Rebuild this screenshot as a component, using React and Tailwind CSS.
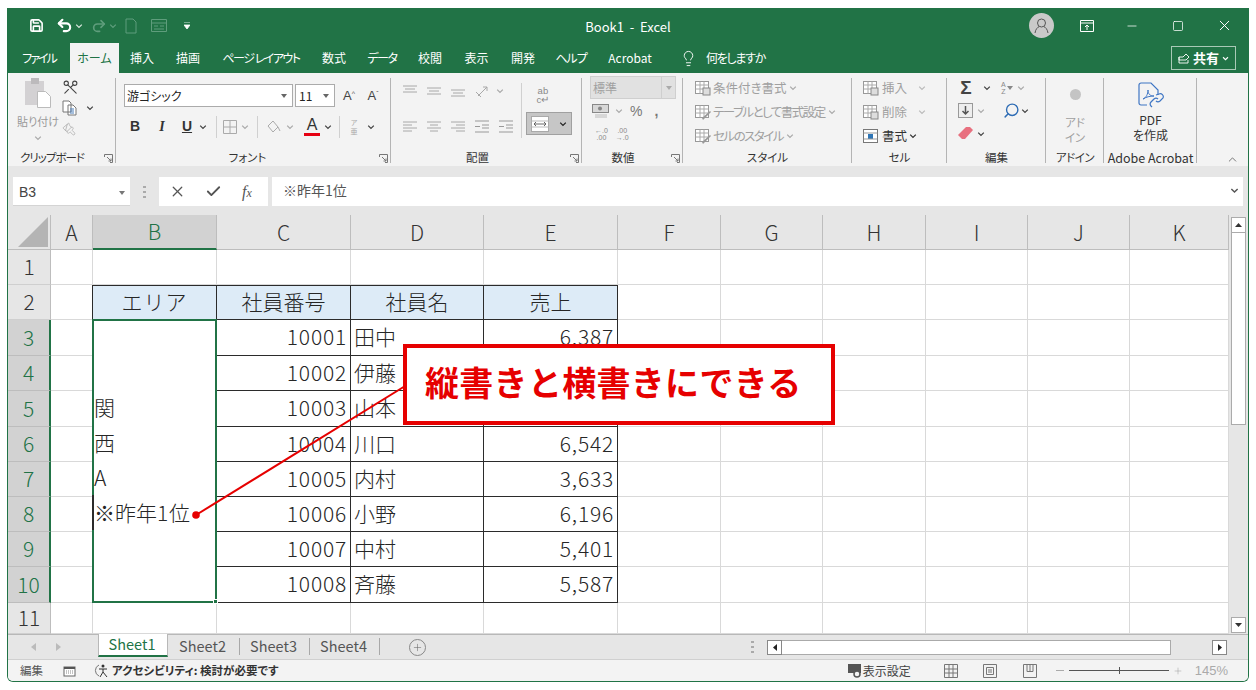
import React from "react";
import { Save, Undo2, Redo2, Lightbulb, Minus, Square, X, Scissors, Paintbrush, Check, Search, Plus, ChevronUp } from "lucide-react";

const Chev = ({ c = "#444", s = 8 }) => (
  <svg width={s} height={s} viewBox="0 0 8 8" className="shrink-0"><path d="M1.2 2.6 4 5.4 6.8 2.6" fill="none" stroke={c} strokeWidth="1.3" /></svg>
);
const Tri = ({ c = "#555" }) => (
  <svg width="6" height="4" viewBox="0 0 6 4" className="shrink-0"><path d="M0 0h6L3 4z" fill={c} /></svg>
);
const Launcher = () => (
  <svg width="9" height="9" viewBox="0 0 9 9" className="shrink-0"><path d="M.5 3V.5h8v8H6M3 3l4 4M7 4.5V7H4.5" fill="none" stroke="#777" strokeWidth="1" /></svg>
);
const Lines = ({ rows, c = "#a8a8a8" }) => (
  <svg width="16" height="14" viewBox="0 0 16 14" className="shrink-0">
    {rows.map(([x1, x2, y], i) => <path key={i} d={`M${x1} ${y}H${x2}`} stroke={c} strokeWidth="1" />)}
  </svg>
);
const Sep = () => <div className="w-px h-[22px] bg-[#d0d0d0] shrink-0" />;

function Group({ w, label, launcher, children }) {
  return (
    <div className={`${w} shrink-0 h-full flex flex-col relative`}>
      <div className="flex-1 min-h-0">{children}</div>
      <div className="h-[19px] flex items-center relative pt-[3px]">
        <div className="w-full text-center text-[11.5px] leading-none text-[#333]">{label}</div>
        {launcher && <div className="absolute right-[3px] top-[7px]"><Launcher /></div>}
      </div>
      <div className="absolute right-0 top-[5px] bottom-[3px] w-px bg-[#b4b4b4]" />
    </div>
  );
}

const TABS = [
  ["w-[62px] tracking-[-2px]", "ファイル"], ["w-[49px]", "ホーム", true], ["w-[46px]", "挿入"], ["w-[46px]", "描画"], ["w-[100px] tracking-[-1.5px]", "ページ レイアウト"],
  ["w-[46px]", "数式"], ["w-[50px] tracking-[-1.5px]", "データ"], ["w-[46px]", "校閲"], ["w-[47px]", "表示"], ["w-[46px]", "開発"], ["w-[50px] tracking-[-1px]", "ヘルプ"], ["w-[68px]", "Acrobat"],
];

function TitleBar() {
  return (
    <div className="h-[35px] shrink-0 bg-[#217346] flex items-center relative text-white">
      <div className="flex items-center pl-[21px]">
        <Save size={15} className="w-[15px] shrink-0" strokeWidth={2.6} />
        <Undo2 size={17} strokeWidth={3} className="ml-[12px]" />
        <div className="ml-[2px]"><Chev c="#d8e6dd" /></div>
        <Redo2 size={16} strokeWidth={2.5} color="#5f9d7c" className="ml-[8px]" />
        <div className="ml-[2px]"><Chev c="#5f9d7c" /></div>
        <svg width="14" height="16" viewBox="0 0 14 16" className="ml-[7px]"><path d="M2 1h7l3 3v11H2z" fill="none" stroke="#5f9d7c" /></svg>
        <svg width="16" height="13" viewBox="0 0 16 13" className="ml-[13px]"><path d="M.5.5h15v12H.5zM.5 4h15M3 7h4M9 7h4M3 10h10" fill="none" stroke="#5f9d7c" /></svg>
        <svg width="6" height="7" viewBox="0 0 6 7" className="ml-[17px]"><path d="M0 0h6M0 3h6L3 7z" stroke="#fff" fill="#fff" strokeWidth=".8" /></svg>
      </div>
      <div className="absolute left-[520px] w-[200px] top-[11px] text-center text-[13px] leading-4">Book1&nbsp; -&nbsp; Excel</div>
      <div className="ml-auto flex items-center">
        <div className="w-[25px] h-[25px] rounded-full bg-[#c9c9c9] flex items-center justify-center">
          <svg width="17" height="17" viewBox="0 0 17 17"><circle cx="8.5" cy="6" r="4" fill="none" stroke="#555" /><path d="M2 16c.5-4 3-6 4-6.300M15 16c-.5-4-3-6-4-6.300" fill="none" stroke="#555" /></svg>
        </div>
        <svg width="14" height="12" viewBox="0 0 14 12" className="ml-[26px]"><path d="M.5.5h13v11H.5zM.5 3h13M7 10V5M5 7l2-2 2 2" fill="none" stroke="#fff" /></svg>
        <Minus size={14} strokeWidth={1.3} className="ml-[31px]" />
        <Square size={12} strokeWidth={1.5} className="ml-[33px]" />
        <X size={17} strokeWidth={1.4} className="ml-[32px] mr-[15px]" />
      </div>
    </div>
  );
}

function TabBar() {
  return (
    <div className="h-[30px] shrink-0 bg-[#217346] flex items-stretch text-white text-[12px]">
      {TABS.map(([w, t, active]) => (
        <div key={t} className={`${w} flex items-center justify-center whitespace-nowrap ${active ? "bg-[#f3f3f3] text-[#217346]" : ""}`}>{t}</div>
      ))}
      <div className="flex items-center ml-[16px]">
        <Lightbulb size={17} strokeWidth={1.3} />
        <span className="ml-[9px] tracking-[-1.3px]">何をしますか</span>
      </div>
      <div className="ml-auto mr-[12px] self-start mt-[3px] w-[65px] h-[24px] border border-[#a9c9b6] flex items-center justify-center gap-[3px]">
        <svg width="12" height="12" viewBox="0 0 12 12"><path d="M1 5h4l3-3 3 3-3 3H1zM1 5v6h9V8" fill="none" stroke="#fff" strokeWidth=".9" /></svg>
        <span className="font-bold text-[13px]">共有</span>
        <Chev c="#fff" s={7} />
      </div>
    </div>
  );
}

function Clipboard() {
  return (
    <Group w="w-[108px]" label={<span className="pr-[20px] tracking-[-1px]">クリップボード</span>} launcher>
      <div className="flex pt-[5px] pl-[10px]">
        <div className="w-[40px] flex flex-col items-center">
          <svg width="26" height="30" viewBox="0 0 26 30"><rect x="0" y="3" width="19" height="24" fill="#d3d1d3" /><rect x="6" y="0" width="8" height="6" fill="#bcbabc" /><path d="M12.500 13.500h8l5 5v11h-13z" fill="#fff" stroke="#bbb" /></svg>
          <div className="text-[11px] leading-none mt-[8px] text-[#999] whitespace-nowrap">貼り付け</div>
          <div className="mt-[7px]"><Chev c="#aaa" /></div>
        </div>
        <div className="ml-[4px] flex flex-col items-start pt-[1px]">
          <Scissors size={17} strokeWidth={1.5} color="#444" className="rotate-90" />
          <div className="flex items-center mt-[4px]">
            <svg width="15" height="16" viewBox="0 0 15 16"><path d="M1 1h6l2 2v9H1zM6 5h5l3 3v7H6z" fill="#fff" stroke="#777" /><path d="M8 9h4M8 11h4M8 13h4" stroke="#4a7ebb" /></svg>
            <div className="ml-[9px]"><Chev /></div>
          </div>
          <Paintbrush size={14} strokeWidth={1.3} color="#aaa" className="mt-[6px] rotate-90" />
        </div>
      </div>
    </Group>
  );
}

function Font() {
  return (
    <Group w="w-[275px]" label={<span className="pr-[12px]">フォント</span>} launcher>
      <div className="pt-[11px] pl-[8px]">
        <div className="flex items-center">
          <div className="w-[169px] h-[23px] bg-white border border-[#ababab] flex items-center pl-[2px] pr-[5px] text-[12px] text-[#222]">
            <span>游ゴシック</span><div className="ml-auto"><Tri c="#666" /></div>
          </div>
          <div className="ml-[2px] w-[40px] h-[23px] bg-white border border-[#ababab] flex items-center pl-[3px] pr-[5px] text-[12px] text-[#222]">
            <span>11</span><div className="ml-auto"><Tri c="#666" /></div>
          </div>
          <div className="w-[24px] ml-[1px] text-center text-[#444] text-[13px] pl-[2px] font-['Liberation_Sans']">A<sup className="text-[7px] text-[#555]">^</sup></div>
          <div className="w-[24px] text-center text-[#444] text-[13px] pl-[2px] font-['Liberation_Sans']">A<sup className="text-[7px] text-[#555]">ˇ</sup></div>
        </div>
        <div className="flex items-center h-[23px] mt-2 text-[14px] text-[#333]">
          <div className="w-[20px] ml-[1px] text-center font-bold font-['Liberation_Sans']">B</div>
          <div className="w-[24px] ml-[5px] text-center font-bold italic font-['Liberation_Serif']">I</div>
          <div className="w-[20px] ml-[3px] text-center font-bold underline font-['Liberation_Sans']">U</div>
          <div className="w-[12px] flex justify-center"><Chev /></div>
          <div className="ml-[7px]"><Sep /></div>
          <svg width="14" height="14" viewBox="0 0 14 14" className="ml-[6px]"><path d="M.5.5h13v13H.5zM7 .5v13M.5 7h13" fill="none" stroke="#aaa" /></svg>
          <div className="ml-[4px]"><Chev c="#aaa" /></div>
          <div className="ml-[8px]"><Sep /></div>
          <svg width="15" height="15" viewBox="0 0 15 15" className="ml-[8px]"><path d="M2 7l5-5 5 6-5 5z" fill="none" stroke="#aaa" /><path d="M12 8l2 4" stroke="#aaa" /></svg>
          <div className="ml-[5px]"><Chev c="#aaa" /></div>
          <div className="ml-[10px] w-[16px] flex flex-col items-center leading-none">
            <span className="text-[16px] leading-[14px] text-[#333] font-['Liberation_Sans']">A</span>
            <div className="w-[16px] h-[3px] bg-[#e60012] mt-[1px]" />
          </div>
          <div className="ml-[4px]"><Chev /></div>
          <div className="ml-[7px]"><Sep /></div>
          <div className="ml-[8px] text-[7px] text-[#aaa] leading-[9px] w-[12px] text-center">ア<br />亜</div>
          <div className="ml-[7px]"><Chev /></div>
        </div>
      </div>
    </Group>
  );
}

function Align() {
  const T = [[1, 15, 2], [3, 13, 5], [1, 15, 8]];
  const M = [[1, 15, 4], [3, 13, 7], [1, 15, 10]];
  const B = [[1, 15, 6], [3, 13, 9], [1, 15, 12]];
  const L = [[1, 15, 2], [1, 10, 5], [1, 15, 8], [1, 10, 11]];
  const C = [[1, 15, 2], [4, 12, 5], [1, 15, 8], [4, 12, 11]];
  const R = [[1, 15, 2], [6, 15, 5], [1, 15, 8], [6, 15, 11]];
  return (
    <Group w="w-[191px]" label={<span className="pr-[18px]">配置</span>} launcher>
      <div className="flex pt-[10px] pl-[11px]">
        <div className="w-[120px] border-r border-[#d0d0d0] h-[55px]">
          <div className="flex items-center h-[16px] gap-[8px]">
            <Lines rows={T} /><Lines rows={M} /><Lines rows={B} />
            <svg width="16" height="15" viewBox="0 0 16 15" className="ml-[1px]"><path d="M3 12 12 3M12 3H8M12 3v4M1 8l5 5" fill="none" stroke="#a8a8a8" /></svg>
            <div className="-ml-[3px]"><Chev c="#aaa" /></div>
          </div>
          <div className="flex items-center h-[16px] gap-[8px] mt-[20px]">
            <Lines rows={L} /><Lines rows={C} /><Lines rows={R} />
            <Lines rows={[[1, 15, 1], [8, 15, 5], [8, 15, 8], [1, 15, 12], [1, 6, 6.500]]} c="#999" />
            <Lines rows={[[1, 15, 1], [8, 15, 5], [8, 15, 8], [1, 15, 12], [1, 6, 6.500]]} c="#999" />
          </div>
        </div>
        <div className="ml-[5px]">
          <div className="ml-[8px] text-[9.5px] leading-[9px] text-[#888] font-['Liberation_Sans'] tracking-wide text-center w-[16px] pt-[3px]">ab<br />c↵</div>
          <div className="mt-[8px] -ml-[1px] w-[46px] h-[23px] bg-[#c6c6c6] border border-[#a0a0a0] flex items-center pl-[4px]">
            <svg width="18" height="16" viewBox="0 0 18 16"><rect x=".5" y=".5" width="17" height="15" fill="#fff" stroke="#aaa" /><path d="M.5 5h17M.5 11h17" stroke="#bbb" /><path d="M3 8h12M3 8l2-2M3 8l2 2M15 8l-2-2M15 8l-2 2" stroke="#666" fill="none" /></svg>
            <div className="ml-[10px]"><Chev c="#222" /></div>
          </div>
        </div>
      </div>
    </Group>
  );
}

function NumberG() {
  return (
    <Group w="w-[101px]" label={<span className="pr-[19px]">数値</span>} launcher>
      <div className="pt-[3px] pl-[8px]">
        <div className="w-[86px] h-[23px] bg-[#e1e1e1] border border-[#cfcfcf] flex items-center pl-[2px] text-[12px] text-[#a0a0a0]">
          <span>標準</span>
          <div className="ml-auto w-[14px] h-full border-l border-[#cfcfcf] flex items-center justify-center"><Tri c="#aaa" /></div>
        </div>
        <div className="flex items-center h-[22px] mt-[1px] pl-[2px]">
          <svg width="17" height="15" viewBox="0 0 17 15"><rect x=".5" y=".5" width="16" height="8" fill="#d8d8d8" stroke="#888" /><circle cx="8" cy="4.500" r="2" fill="#888" /><path d="M3 11h12M3 13h12" stroke="#bbb" /></svg>
          <div className="ml-[6px]"><Chev c="#aaa" /></div>
          <span className="ml-[7px] text-[14px] text-[#777] font-['Liberation_Sans']">%</span>
          <span className="ml-[12px] text-[14px] font-bold leading-none text-[#777] font-['Liberation_Sans']">,</span>
        </div>
        <div className="flex items-center h-[22px] mt-[1px] pl-[5px] text-[7px] leading-[7px] text-[#888] font-['Liberation_Sans']">
          <div className="text-center">←.0<br />.00</div>
          <div className="ml-[8px] text-center">.00<br />→.0</div>
        </div>
      </div>
    </Group>
  );
}

const StyleIcon = ({ kind }) => (
  <svg width="16" height="15" viewBox="0 0 16 15" className="shrink-0">
    <rect x=".5" y=".5" width="13" height="12" fill="#fff" stroke="#999" />
    <path d="M.5 4h13M.5 8h13M5 .5v12M9 .5v12" stroke="#aaa" />
    {kind === 1 && <rect x="8" y="7" width="7" height="7" fill="#ddd" stroke="#888" />}
    {kind !== 1 && <path d="M7 13l8-7 1 1-8 8z" fill="#999" />}
  </svg>
);

function Styles() {
  const rows = [[1, "条件付き書式", ""], [2, "テーブルとして書式設定", "tracking-[-1.5px]"], [3, "セルのスタイル", "tracking-[-1.5px]"]];
  return (
    <Group w="w-[169px]" label="スタイル">
      <div className="pt-[3px] pl-[12px]">
        {rows.map(([k, t, tr]) => (
          <div key={k} className="flex items-center h-[24px] text-[12.5px] text-[#a0a0a0] whitespace-nowrap">
            <StyleIcon kind={k} />
            <span className={`ml-[2px] ${tr}`}>{t}</span>
            <div className="ml-[3px]"><Chev c="#aaa" /></div>
          </div>
        ))}
      </div>
    </Group>
  );
}

function Cells() {
  return (
    <Group w="w-[95px]" label="セル">
      <div className="pt-[3px] pl-[11px]">
        <div className="flex items-center h-[24px] text-[12.5px] text-[#a0a0a0]">
          <StyleIcon kind={1} /><span className="ml-[3px] w-[36px]">挿入</span><Chev c="#bbb" />
        </div>
        <div className="flex items-center h-[24px] text-[12.5px] text-[#a0a0a0]">
          <StyleIcon kind={1} /><span className="ml-[3px] w-[36px]">削除</span><Chev c="#bbb" />
        </div>
        <div className="flex items-center h-[24px] text-[12.5px] text-[#333]">
          <svg width="16" height="15" viewBox="0 0 16 15" className="shrink-0"><rect x=".5" y=".5" width="14" height="13" fill="#fff" stroke="#777" /><rect x="5" y="5" width="5" height="5" fill="#2f75b5" /><path d="M.5 4h14M.5 10h14" stroke="#999" /></svg>
          <span className="ml-[3px]">書式</span>
          <div className="ml-[2px]"><Chev c="#333" /></div>
        </div>
      </div>
    </Group>
  );
}

function Edit() {
  return (
    <Group w="w-[99px]" label="編集">
      <div className="pt-[3px] pl-[11px]">
        <div className="flex items-center h-[23px]">
          <span className="w-[16px] text-[19px] leading-none text-[#444] font-['Liberation_Sans'] font-bold text-center">Σ</span>
          <div className="ml-[9px]"><Chev /></div>
          <div className="ml-[10px] text-[7px] leading-[7px] text-[#888] font-['Liberation_Sans'] text-center">A<br />Z</div>
          <div className="ml-[1px]"><Tri c="#888" /></div>
          <div className="ml-[4px]"><Chev c="#aaa" /></div>
        </div>
        <div className="flex items-center h-[23px]">
          <svg width="15" height="15" viewBox="0 0 15 15" className="shrink-0"><rect x=".5" y=".5" width="14" height="14" fill="#eee" stroke="#999" /><path d="M7.500 3v8M4.500 8l3 3 3-3" fill="none" stroke="#555" strokeWidth="1.500" /></svg>
          <div className="ml-[4px]"><Chev c="#aaa" /></div>
          <Search size={17} strokeWidth={2} color="#2f6db5" className="ml-[18px] -scale-x-100" />
          <div className="ml-[1px]"><Chev /></div>
        </div>
        <div className="flex items-center h-[23px]">
          <svg width="15" height="13" viewBox="0 0 15 13" className="shrink-0"><path d="M0 8 8 0h4l3 3-8 9H4z" fill="#e8707f" /></svg>
          <div className="ml-[4px]"><Chev /></div>
        </div>
      </div>
    </Group>
  );
}

function Addin() {
  return (
    <Group w="w-[58px]" label={<span className="tracking-[-.5px]">アドイン</span>}>
      <div className="flex flex-col items-center pt-[16px] text-[11.5px] leading-[15px] text-[#a0a0a0]">
        <div className="w-[11px] h-[11px] rounded-full bg-[#c4c4c4]" />
        <div className="mt-[15px]">アド</div>
        <div>イン</div>
      </div>
    </Group>
  );
}

function Acrobat() {
  return (
    <Group w="w-[93px]" label={<span className="text-[12.5px]">Adobe Acrobat</span>}>
      <div className="flex flex-col items-center pt-[9px] text-[12px] leading-[15px] text-[#333]">
        <svg width="27" height="28" viewBox="0 0 27 28">
          <path d="M10 23H4a2 2 0 0 1-2-2V3a2 2 0 0 1 2-2h10l7 7v5" fill="none" stroke="#3f76c4" strokeWidth="1.200" />
          <path d="M6 17c3-1 5-5 5-9 0 4 2 6 6 6-4 0-8 1-11 3z" fill="none" stroke="#3f76c4" />
          <path d="M15 25l-1-1a3 3 0 0 1 0-4l3-3a3 3 0 0 1 4 0M19 13l3-1a3 3 0 0 1 4 4l-3 3a3 3 0 0 1-4 0" fill="none" stroke="#3f76c4" strokeWidth="1.200" />
        </svg>
        <div className="mt-[2px]">PDF</div>
        <div>を作成</div>
      </div>
    </Group>
  );
}

function Ribbon() {
  return (
    <div className="h-[93px] shrink-0 bg-[#f3f3f3] flex relative text-[#333]">
      <Clipboard /><Font /><Align /><NumberG /><Styles /><Cells /><Edit /><Addin /><Acrobat />
      <ChevronUp size={13} strokeWidth={1.3} color="#444" className="absolute right-[9px] bottom-0" />
    </div>
  );
}

function FormulaBar() {
  return (
    <div className="h-[49px] shrink-0 bg-[#e6e6e6] px-[5px] pt-[11px] flex items-start">
      <div className="w-[117px] h-[29px] bg-white border-b border-[#d4d4d4] flex items-center pl-[6px] pr-[5px] pt-[3px] text-[14px] text-[#444] font-['Liberation_Sans']">
        <span>B3</span><div className="ml-auto"><Tri c="#777" /></div>
      </div>
      <div className="w-[29px] h-[29px] flex items-center justify-center">
        <svg width="3" height="12" viewBox="0 0 3 12"><path d="M0 0h3v2H0zM0 5h3v2H0zM0 10h3v2H0z" fill="#aaa" /></svg>
      </div>
      <div className="w-[109px] h-[29px] bg-white flex items-center text-[#555]">
        <X size={17} strokeWidth={1.8} className="ml-[10px]" />
        <Check size={17} strokeWidth={2.6} className="ml-[19px]" />
        <span className="ml-[20px] text-[16px] italic font-['Liberation_Serif']">f<span className="text-[12px]">x</span></span>
      </div>
      <div className="ml-[4px] w-[971px] h-[29px] bg-white flex items-center pl-[11px] pr-[4px] pb-[2px] text-[14px] text-[#555]">
        <span>※昨年1位</span>
        <div className="ml-auto"><Chev c="#555" s={9} /></div>
      </div>
    </div>
  );
}

const COLS = ["A", "B", "C", "D", "E", "F", "G", "H", "I", "J", "K"];
const DATA = [
  [3, "10001", "田中", "6,387"], [4, "10002", "伊藤", ""], [5, "10003", "山本", ""], [6, "10004", "川口", "6,542"],
  [7, "10005", "内村", "3,633"], [8, "10006", "小野", "6,196"], [9, "10007", "中村", "5,401"], [10, "10008", "斉藤", "5,587"],
];
const gridCell = "border-r border-b border-[#d9d9d9]";
const dataCell = "border-r border-b border-[#2b2b2b] flex items-center pb-[2px]";

const RowHead = ({ n, sel }) => (
  <div className={`flex items-center justify-center border-b pb-[1px] ${sel ? "bg-[#d2d2d2] text-[#217346] border-r-2 border-r-[#217346] border-b-[#bdbdbd]" : "bg-[#e6e6e6] text-[#333] border-r border-r-[#bdbdbd] border-b-[#cfcfcf]"}`}>{n}</div>
);
const Blank = ({ n = 1 }) => Array.from({ length: n }, (_, i) => <div key={i} className={gridCell} />);

function Sheet() {
  return (
    <div className="flex-1 min-w-0 grid grid-cols-[43px_42px_124px_134px_133px_134px_103px_102px_103px_102px_102px_99px] grid-rows-[35px_35px_35px_36px_35px_36px_35px_35px_35px_35px_36px_31px] text-[21px] leading-none font-light text-[#262626]">
      <div className="bg-[#e6e6e6] border-r border-b border-[#bdbdbd] flex items-end justify-end pr-[2px] pb-[2px]">
        <svg width="30" height="30" viewBox="0 0 30 30"><path d="M30 0v30H0z" fill="#b4b4b4" /></svg>
      </div>
      {COLS.map((c) => (
        <div key={c} className={`flex items-center justify-center border-r ${c === "B" ? "bg-[#d2d2d2] text-[#217346] border-b-2 border-b-[#217346] border-r-[#bdbdbd]" : "bg-[#e6e6e6] text-[#333] border-b border-[#bdbdbd]"}`}>{c}</div>
      ))}

      <RowHead n={1} /><Blank n={11} />

      <RowHead n={2} /><Blank />
      {["エリア", "社員番号", "社員名", "売上"].map((t, i) => (
        <div key={t} className={`bg-[#ddebf7] border-t border-r border-b border-[#2b2b2b] flex items-center justify-center pb-[2px] ${i === 0 ? "border-l -ml-px tracking-[1px]" : ""}`}>{t}</div>
      ))}
      <Blank n={6} />

      {DATA.map(([r, id, name, sale], i) => (
        <React.Fragment key={r}>
          <RowHead n={r} sel /><Blank />
          {i === 0 && (
            <div className="row-span-8 border-2 border-[#217346] -mt-px -ml-px relative flex flex-col pt-[68px]">
              <div className="h-[36px] flex items-center">関</div>
              <div className="h-[35px] flex items-center">西</div>
              <div className="h-[35px] flex items-center">A</div>
              <div className="h-[35px] flex items-center border-l-2 border-[#2b2b2b] -ml-[2px] whitespace-nowrap">※昨年<span className="tracking-[0.8px]">1</span>位</div>
              <div className="absolute -right-[3px] -bottom-[3px] w-[5px] h-[5px] bg-[#217346] border border-white" />
            </div>
          )}
          <div className={`${dataCell} justify-end pr-[3px] tracking-[0.8px]`}>{id}</div>
          <div className={`${dataCell} pl-[3px]`}>{name}</div>
          <div className={`${dataCell} justify-end pr-[3px] tracking-[0.8px]`}>{sale}</div>
          <Blank n={6} />
        </React.Fragment>
      ))}

      <RowHead n={11} /><Blank n={11} />
    </div>
  );
}

function VScroll() {
  return (
    <div className="w-[19px] shrink-0 bg-[#e6e6e6] flex flex-col pt-[2px] pb-[1px] pl-[2px] pr-[2px]">
      <div className="h-[16px] bg-white border border-[#ababab] flex items-center justify-center"><svg width="7" height="4" viewBox="0 0 7 4"><path d="M0 4h7L3.500 0z" fill="#333" /></svg></div>
      <div className="h-[193px] bg-white border border-[#ababab] -mt-px" />
      <div className="flex-1" />
      <div className="h-[16px] bg-white border border-[#ababab] flex items-center justify-center"><svg width="7" height="4" viewBox="0 0 7 4"><path d="M0 0h7L3.500 4z" fill="#333" /></svg></div>
    </div>
  );
}

function SheetTabs() {
  const Divider = () => <div className="w-px h-[17px] bg-[#a8a8a8]" />;
  return (
    <div className="h-[25px] shrink-0 bg-[#e6e6e6] border-t border-[#b8b8b8] flex items-start text-[14.5px] text-[#555]">
      <div className="w-[90px] h-full flex items-center pl-[23px] gap-[20px]">
        <svg width="5" height="8" viewBox="0 0 5 8"><path d="M5 0v8L0 4z" fill="#bbb" /></svg>
        <svg width="5" height="8" viewBox="0 0 5 8"><path d="M0 0v8l5-4z" fill="#bbb" /></svg>
      </div>
      <div className="-mt-px w-[70px] h-[23px] bg-white border-l border-r border-[#b8b8b8] border-b-2 border-b-[#217346] text-[#217346] flex items-center justify-center pr-[2px] pb-[1px]">Sheet1</div>
      <div className="w-[71px] h-[21px] flex items-center justify-center pr-[2px]">Sheet2</div>
      <div className="mt-[3px]"><Divider /></div>
      <div className="w-[69px] h-[21px] flex items-center justify-center pr-[2px]">Sheet3</div>
      <div className="mt-[3px]"><Divider /></div>
      <div className="w-[69px] h-[21px] flex items-center justify-center pr-[2px]">Sheet4</div>
      <div className="mt-[3px]"><Divider /></div>
      <div className="ml-[29px] mt-[4px] w-[17px] h-[17px] rounded-full border border-[#888] flex items-center justify-center"><Plus size={11} strokeWidth={1.2} color="#666" /></div>
      <svg width="3" height="12" viewBox="0 0 3 12" className="ml-[325px] mt-[6px]"><path d="M0 0h3v2H0zM0 5h3v2H0zM0 10h3v2H0z" fill="#aaa" /></svg>
      <div className="ml-[13px] mt-[5px] w-[15px] h-[15px] bg-white border border-[#888] flex items-center justify-center"><svg width="4" height="7" viewBox="0 0 4 7"><path d="M4 0v7L0 3.500z" fill="#222" /></svg></div>
      <div className="mt-[5px] w-[389px] h-[15px] bg-white border border-l-0 border-[#aaa]" />
      <div className="ml-[41px] mt-[5px] w-[15px] h-[15px] bg-white border border-[#888] flex items-center justify-center"><svg width="4" height="7" viewBox="0 0 4 7"><path d="M0 0v7l4-3.500z" fill="#222" /></svg></div>
    </div>
  );
}

function StatusBar() {
  return (
    <div className="h-[22px] shrink-0 bg-[#f3f3f3] border-t border-[#d0d0d0] flex items-center text-[11.5px] text-[#555]">
      <span className="ml-[12px]">編集</span>
      <svg width="13" height="12" viewBox="0 0 13 12" className="ml-[20px]"><rect x="1" y="2" width="11" height="9" fill="#fff" stroke="#666" /><path d="M1 2h11v2H1z" fill="#555" /><path d="M3 6h7M3 8h7" stroke="#888" strokeDasharray="1 1" /></svg>
      <svg width="17" height="15" viewBox="0 0 17 15" className="ml-[17px]"><path d="M6 2a6 6 0 0 0 0 11" fill="none" stroke="#777" /><circle cx="10" cy="3" r="1.500" fill="#333" /><path d="M6 6h8M10 6v3l-3 5M10 9l4 5" fill="none" stroke="#333" /></svg>
      <span className="ml-[2px] font-bold text-[#333]">アクセシビリティ: 検討が必要です</span>
      <div className="ml-auto flex items-center">
        <svg width="15" height="15" viewBox="0 0 15 15"><path d="M0 1h13v9H0z" fill="#555" /><circle cx="9" cy="11" r="3" fill="#f3f3f3" stroke="#555" strokeWidth="1.500" /></svg>
        <span className="text-[12px] text-[#444]">表示設定</span>
        <svg width="14" height="14" viewBox="0 0 14 14" className="ml-[33px]"><path d="M.5.5h13v13H.5zM.5 5h13M.5 9h13M5 .5v13M9 .5v13" fill="none" stroke="#777" /></svg>
        <svg width="14" height="14" viewBox="0 0 14 14" className="ml-[25px]"><path d="M.5.5h13v13H.5zM3.500 3.500h7v7h-7zM5 6h4M5 8h4" fill="none" stroke="#777" /></svg>
        <svg width="14" height="14" viewBox="0 0 14 14" className="ml-[26px]"><path d="M.5.500h13v13H.5zM4 .5v7h6v-7M7 .5v7" fill="none" stroke="#777" /></svg>
        <div className="ml-[19px] w-[8px] h-px bg-[#aaa]" />
        <div className="ml-[5px] w-[100px] h-px bg-[#555] relative">
          <div className="absolute left-[50px] -top-[3px] w-px h-[7px] bg-[#555]" />
        </div>
        <Plus size={10} strokeWidth={1} color="#888" className="ml-[4px]" />
        <span className="ml-[12px] mr-[20px] text-[13px] text-[#aaa] font-['Liberation_Sans']">145%</span>
      </div>
    </div>
  );
}

function Callout() {
  return (
    <>
      <svg width="1256" height="690" viewBox="0 0 1256 690" className="absolute left-0 top-0 pointer-events-none">
        <path d="M410 383 196 515" stroke="#e60000" strokeWidth="2" />
        <circle cx="196" cy="515" r="3.800" fill="#e60000" />
      </svg>
      <div className="absolute left-[403px] top-[344px] w-[432px] h-[81px] bg-white border-[4px] border-[#e60000] flex items-center pl-[18px] pb-[6px] text-[34px] font-bold text-[#e60000] whitespace-nowrap leading-none tracking-[0.3px]">
        縦書きと横書きにできる
      </div>
    </>
  );
}

export default function App() {
  return (
    <div className="relative w-[1256px] h-[690px] bg-white pt-2 pl-[7px] overflow-hidden font-['Noto_Sans_CJK_JP',sans-serif]">
      <div className="w-[1242px] h-[674px] flex flex-col border-x border-b border-[#217346] rounded-b-[6px] overflow-hidden [font-feature-settings:'palt']">
        <TitleBar />
        <TabBar />
        <Ribbon />
        <FormulaBar />
        <div className="h-[419px] shrink-0 flex [font-feature-settings:normal]">
          <Sheet />
          <VScroll />
        </div>
        <SheetTabs />
        <StatusBar />
      </div>
      <Callout />
    </div>
  );
}
